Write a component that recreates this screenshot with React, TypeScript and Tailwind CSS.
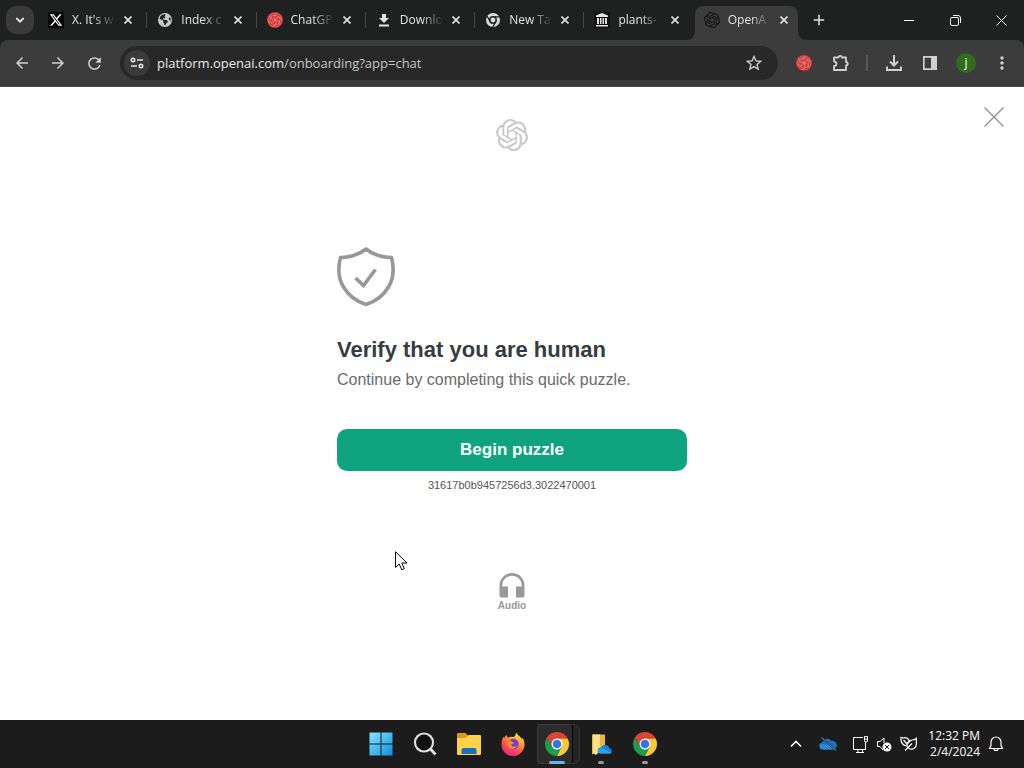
import type { ReactNode } from "react";
import { FaEarthAmericas, FaXTwitter } from "react-icons/fa6";
import { MdAdd, MdArrowBack, MdArrowForward, MdMoreVert, MdRefresh, MdStarBorder } from "react-icons/md";
import { SiOpenai } from "react-icons/si";

function RedBadge() {
  return (
    <svg viewBox="0 0 16 16" className="size-4">
      <circle cx="8" cy="8" r="8" fill="#c93636" />
      <g fill="none" stroke="#f07a7a" strokeWidth="0.6">
        <circle cx="8" cy="8" r="6.8" />
        {[0, 60, 120, 180, 240, 300].map(a => (
          <path key={a} transform={`rotate(${a} 8 8)`} d="M8 8C6 6 6.500 3 9 2M8 8C9 6 12 5 14 7M6 3.500C8 2 11 3 11.500 5.500" />
        ))}
      </g>
    </svg>
  );
}

function BankIcon() {
  return (
    <span className="flex size-4 items-center justify-center bg-[#111]">
      <svg viewBox="0 0 14 14" className="size-3.5" fill="#e3e3e3">
        <path d="M7 0 13 2.500V4H1V2.500zM2 5h2v6H2zM5 5h1.500v6H5zM7.500 5H9v6H7.500zM10 5h2v6h-2zM1 12h12v1.500H1z" />
      </svg>
    </span>
  );
}

function DownloadTab() {
  return (
    <svg viewBox="0 0 16 16" className="size-4" fill="#e3e3e3">
      <path d="M6 2h4v4h3l-5 5-5-5h3zM3 12.500h10v2H3z" />
    </svg>
  );
}

function GrayChrome() {
  return (
    <svg viewBox="0 0 14 14" className="size-3.5" fill="none" stroke="#1f2020" strokeWidth="1.300">
      <circle cx="7" cy="7" r="7" fill="#dcdcdc" stroke="none" />
      <path d="M7 3.800H13.500M4.200 8.600 1 3M9.800 8.600 6.600 14.200" />
      <circle cx="7" cy="7" r="3.200" fill="#dcdcdc" strokeWidth="1.500" />
    </svg>
  );
}

// titles are kept as short as the narrow tabs show them
const tabs: { title: string; icon: ReactNode; active?: boolean }[] = [
  { title: "X. It's w", icon: <span className="flex size-4 items-center justify-center bg-black"><FaXTwitter className="size-3.5 text-white" /></span> },
  { title: "Index c", icon: <FaEarthAmericas className="size-3.5 text-[#c8c8c8]" /> },
  { title: "ChatGP", icon: <RedBadge /> },
  { title: "Downlo", icon: <DownloadTab /> },
  { title: "New Ta", icon: <GrayChrome /> },
  { title: "plants-", icon: <BankIcon /> },
  { title: "OpenA", icon: <SiOpenai className="size-4 text-[#111]" />, active: true },
];

function TabStrip() {
  return (
    <header className="flex h-10 items-start bg-[#1f2020] text-[#e3e3e3]">
      <button aria-label="Search tabs" className="mt-1.5 mr-1 ml-1.5 flex size-7 shrink-0 items-center justify-center rounded-[10px] bg-[#3a3a3a]">
        <svg viewBox="0 0 10 6" className="h-1.5 w-2.5" fill="none" stroke="currentColor" strokeWidth="1.900"><path d="M1.300 1 5 4.600 8.700 1" /></svg>
      </button>
      <nav className="grid h-10 max-w-[765px] flex-1 grid-cols-7">
        {tabs.map((t, i) => (
          <div key={t.title} className="relative flex min-w-0 pt-1.5">
            {t.active && (
              <svg viewBox="0 0 121 34" preserveAspectRatio="none" className="absolute top-1.5 -left-2 h-[34px] w-[121px]" fill="#3c3c3c">
                <path d="M0 34Q9 34 9 25V9Q9 0 18 0H103Q112 0 112 9V25Q112 34 121 34Z" />
              </svg>
            )}
            <div className="relative flex h-7 min-w-0 flex-1 items-center pr-[11px] pl-2.5">
              <span className="flex size-4 shrink-0 items-center justify-center">{t.icon}</span>
              <a href="#" className="ml-2 min-w-0 flex-1 overflow-hidden mask-r-from-45% mask-r-to-90% text-[12px] leading-5 whitespace-nowrap">{t.title}</a>
              <button aria-label={`Close ${t.title}`} className="flex size-4 shrink-0 items-center justify-center">
                <svg viewBox="0 0 8 8" className="size-2" stroke="currentColor" strokeWidth="1.600"><path d="M.5.5l7 7M7.500.5l-7 7" /></svg>
              </button>
            </div>
            {i < 5 && <span className="absolute top-3 right-0 h-4 w-px bg-[#474747]" />}
          </div>
        ))}
      </nav>
      <button aria-label="New tab" className="mt-1.5 flex h-7 w-8 items-center justify-center"><MdAdd className="size-[18px]" /></button>
      <div className="ml-auto flex h-10 text-white">
        <button aria-label="Minimize" className="flex w-[46px] items-center justify-center">
          <svg viewBox="0 0 10 10" className="size-2.5" stroke="currentColor"><path d="M0 5.500h10" /></svg>
        </button>
        <button aria-label="Restore" className="flex w-[46px] items-center justify-center">
          <svg viewBox="0 0 11 11" className="size-[11px]" fill="none" stroke="currentColor"><rect x="0.500" y="2.500" width="8" height="8" rx="1.500" /><path d="M3 .5h5a2.500 2.500 0 0 1 2.500 2.500v5" /></svg>
        </button>
        <button aria-label="Close window" className="flex w-[46px] items-center justify-center">
          <svg viewBox="0 0 11 11" className="size-[11px]" stroke="currentColor"><path d="M.5.5l10 10M10.500.5l-10 10" /></svg>
        </button>
      </div>
    </header>
  );
}

function ToolButton({ label, children }: { label: string; children: ReactNode }) {
  return <button aria-label={label} className="flex h-[34px] w-9 shrink-0 items-center justify-center">{children}</button>;
}

function Toolbar() {
  return (
    <div className="bg-[#1f2020]">
      <div className="flex h-[47px] items-start rounded-t-lg border-b border-[#4a4a4a] bg-[#3c3c3c] px-1 pt-1.5 text-[#d0d0d0]">
        <ToolButton label="Back"><MdArrowBack className="size-[18px]" /></ToolButton>
        <ToolButton label="Forward"><MdArrowForward className="size-[18px]" /></ToolButton>
        <ToolButton label="Reload"><MdRefresh className="size-[19px]" /></ToolButton>
        <div className="mx-2 flex h-[34px] min-w-0 flex-1 items-center rounded-full bg-[#282828] pr-3.5 pl-1">
          <button aria-label="Site information" className="flex size-[26px] shrink-0 items-center justify-center rounded-full bg-[#3a3a3a]">
            <svg viewBox="0 0 14 12" className="h-3 w-3.5" fill="none" stroke="#e3e3e3" strokeWidth="1.600">
              <circle cx="3" cy="3" r="1.700" /><path d="M7 3h6M1 9h6" /><circle cx="11" cy="9" r="1.700" />
            </svg>
          </button>
          <div className="ml-[7px] flex-1 truncate text-[13px] leading-5 text-[#c4c4c4]">
            <span className="text-[#e8e8e8]">platform.openai.com</span>/onboarding?app=chat
          </div>
          <button aria-label="Bookmark this tab"><MdStarBorder className="size-5" /></button>
        </div>
        <ToolButton label="ChatGPT extension"><RedBadge /></ToolButton>
        <ToolButton label="Extensions">
          <svg viewBox="0 0 18 18" className="size-[18px]" fill="none" stroke="currentColor" strokeWidth="1.800" strokeLinejoin="round">
            <path d="M3 3.500H7.500A1.700 1.700 0 0 1 10.900 3.500H15V8A1.700 1.700 0 0 1 15 11.400V16H3V12.200A2.300 2.300 0 0 0 3 7.400Z" />
          </svg>
        </ToolButton>
        <span className="mx-2 mt-[9px] h-4 w-0.5 bg-[#575757]" />
        <ToolButton label="Downloads">
          <svg viewBox="0 0 16 16" className="size-4" fill="none" stroke="currentColor" strokeWidth="2"><path d="M8 0v10M4 6.500l4 4 4-4M1 11.500V15h14v-3.500" /></svg>
        </ToolButton>
        <ToolButton label="Side panel">
          <svg viewBox="0 0 14 14" className="size-3.5" fill="currentColor"><path d="M0 0h14v14H0zM1.700 1.700v10.600H8V1.700z" fillRule="evenodd" /></svg>
        </ToolButton>
        <ToolButton label="Profile"><span className="flex size-5 items-center justify-center rounded-full bg-[#2f6d1c] text-[12px] leading-4 text-white">j</span></ToolButton>
        <ToolButton label="Menu"><MdMoreVert className="size-5" /></ToolButton>
      </div>
    </div>
  );
}

function Challenge() {
  return (
    <main className="relative flex flex-1 flex-col items-center bg-white pt-8 font-['Liberation_Sans',sans-serif]">
      <button aria-label="Close" className="absolute top-5 right-5 text-[#8c8c8c]">
        <svg viewBox="0 0 20 20" className="size-5" stroke="currentColor" strokeWidth="1.200"><path d="M.5.5l19 19M19.500.5l-19 19" /></svg>
      </button>
      <SiOpenai className="size-8 text-[#c9c9c9]" />
      <section className="mt-24 flex w-full max-w-[350px] flex-col">
        <svg viewBox="0 0 58 60" className="h-[60px] w-[58px]" fill="none" stroke="#97979c" strokeWidth="3.600" strokeLinejoin="round">
          <path d="M29 2C22.500 7 13 10.500 3.500 10.500C.8 21 1 31 6.500 40C11.500 48.500 19.500 54.500 29 57.500C38.500 54.500 46.500 48.500 51.500 40C57 31 57.200 21 54.500 10.500C45 10.500 35.500 7 29 2Z" />
          <path d="M18.500 31l8 7.500L38.500 22.500" strokeLinejoin="miter" />
        </svg>
        <h1 className="mt-[29px] text-[22px] leading-7 font-bold text-[#353d40]">Verify that you are human</h1>
        <p className="mt-1 text-[16px] leading-6 text-[#6b6b6b]">Continue by completing this quick puzzle.</p>
        <button className="mt-[37px] h-[42px] rounded-[10px] bg-[#10a37f] text-[17px] font-bold text-white">Begin puzzle</button>
        <p className="mt-1.5 text-center text-[11px] leading-4 text-[#555]">31617b0b9457256d3.3022470001</p>
      </section>
      <button className="mt-20 flex flex-col items-center text-[#999]">
        <svg viewBox="0 0 26 25" className="h-[25px] w-[26px]" fill="currentColor">
          <path d="M13 0C5.800 0 .5 5.500.5 12.500V22.500Q.5 24.500 2.500 24.500H9V13.500H3.300V12.500C3.300 7 7.500 2.800 13 2.800S22.700 7 22.700 12.500V13.500H17V24.500H23.500Q25.500 24.500 25.500 22.500V12.500C25.500 5.500 20.200 0 13 0Z" />
        </svg>
        <span className="text-[10px] leading-4 font-bold">Audio</span>
      </button>
      <svg viewBox="0 0 13 20" className="absolute top-[464px] left-[395px] h-5 w-[13px]" fill="#fff" stroke="#000" strokeWidth="1">
        <path d="M.5.8V16.500L4.200 13 6.800 18.800 9.300 17.700 6.800 12H12Z" />
      </svg>
    </main>
  );
}

function ChromeIcon() {
  return (
    <svg viewBox="0 0 24 24" className="size-6">
      <path d="M12 6.500H22.670A12 12 0 0 0 1.610 6L7.200 14.700z" fill="#db4437" />
      <path d="M1.610 6A12 12 0 0 0 12 24L16.800 14.700 7.200 14.700z" fill="#1a9e4b" />
      <path d="M12 24A12 12 0 0 0 22.670 6.500H12L16.800 14.700z" fill="#fcc934" />
      <circle cx="12" cy="12" r="5.500" fill="#fff" />
      <circle cx="12" cy="12" r="4.300" fill="#3274e0" />
    </svg>
  );
}

function FirefoxIcon() {
  return (
    <svg viewBox="0 0 24 24" className="size-6">
      <defs>
        <linearGradient id="ffBody" x1="0.800" y1="0" x2="0.250" y2="1">
          <stop offset="0" stopColor="#fff04a" /><stop offset="0.350" stopColor="#ffa02d" /><stop offset="0.650" stopColor="#ff4b4b" /><stop offset="1" stopColor="#e5228f" />
        </linearGradient>
      </defs>
      <path d="M15.500.5C14 3 14.500 4.500 12 5C9.500 4.500 8.300 5 7 5.800C6 5 5.900 4 6 3C4.500 3.800 3.800 4.800 3.300 6L2.500 4.800C1 7 .5 9.500.5 12.500A11.500 11.500 0 0 0 23.500 12.500C23.500 9.500 22.500 7 20.800 5.500L21 7.500C19.500 4 16 3.500 15.500.5Z" fill="url(#ffBody)" />
      <circle cx="12.500" cy="12" r="5.200" fill="#7541d5" />
      <path d="M5 9.500C7 8 9.500 8.500 11 10L13 10.500C12.500 12 11 12 10 12.500C10.500 15 14 15.500 16 13.500C14.500 18.500 6 18 5 9.500Z" fill="#ff8b2d" />
    </svg>
  );
}

const apps: { label: string; icon: ReactNode; state?: "active" | "open" }[] = [
  {
    label: "Start",
    icon: (
      <svg viewBox="0 0 24 24" className="size-6">
        <defs><linearGradient id="winBlue" gradientUnits="userSpaceOnUse" x1="0" y1="0" x2="24" y2="24"><stop stopColor="#8be6ff" /><stop offset="1" stopColor="#0a8be0" /></linearGradient></defs>
        <path d="M.5.5h11v11H.5zM12.500.5h11v11h-11zM.5 12.500h11v11H.5zM12.500 12.500h11v11h-11z" fill="url(#winBlue)" />
      </svg>
    ),
  },
  {
    label: "Search",
    icon: <svg viewBox="0 0 24 24" className="size-6" fill="#101010" stroke="#dedede" strokeWidth="2.200"><circle cx="11" cy="10.500" r="9" /><path d="M17.500 17l5 5.500" strokeWidth="2.800" /></svg>,
  },
  {
    label: "File Explorer",
    icon: (
      <svg viewBox="0 0 24 24" className="size-6">
        <path d="M0 2Q0 1 1 1H8.500L11 3.500V7H0Z" fill="#d99b17" />
        <path d="M0 6H8.500L11.500 3H23Q24 3 24 4V22Q24 23 23 23H1Q0 23 0 22Z" fill="#ffd04b" />
        <path d="M4.500 22V18Q4.500 16 6.500 16H17.500Q19.500 16 19.500 18V22Z" fill="#1272bd" />
        <path d="M8 19.500h8V22H8z" fill="#2a6f9f" />
      </svg>
    ),
  },
  { label: "Firefox", icon: <FirefoxIcon /> },
  { label: "Chrome", icon: <ChromeIcon />, state: "active" },
  {
    label: "OneDrive folder",
    icon: (
      <svg viewBox="0 0 24 24" className="size-6">
        <path d="M3 2.500H16V20H8L3 22.500Z" fill="#e9b83b" /><path d="M4 2.500H11V19L7 23 4 21Z" fill="#ffe08a" />
        <path d="M11.500 21.500A3 3 0 0 1 12 15.500 4.500 4.500 0 0 1 19 14Q20 15 20.500 16.300A2.700 2.700 0 0 1 21 21.500Z" fill="#1683d8" />
        <path d="M12 15.500L22.500 20.800Q22 21.500 21 21.500H11.500A3 3 0 0 1 12 15.500Z" fill="#2aa0ef" />
      </svg>
    ),
    state: "open",
  },
  { label: "Chrome profile", icon: <ChromeIcon />, state: "open" },
];

function Taskbar() {
  return (
    <footer className="grid h-12 grid-cols-[1fr_auto_1fr] items-center bg-[#1c1c1c] text-white">
      <span />
      <div className="flex pl-0.5">
        {apps.map(a => (
          <button key={a.label} aria-label={a.label} className="relative flex h-12 w-11 items-center justify-center">
            {a.state === "active" && (
              <>
                <span className="absolute inset-y-1 -right-px left-2 rounded-md border border-[#343434] bg-[#242424]" />
                <span className="absolute inset-y-1 right-1.5 left-0.5 rounded border border-r-black border-[#3b3b3b] bg-[#2c2c2c]" />
              </>
            )}
            <span className="relative">{a.icon}</span>
            {a.state === "active" && <span className="absolute bottom-1 h-[3px] w-4 rounded-full bg-[#5db9ef]" />}
            {a.state === "open" && <span className="absolute bottom-1 h-[3px] w-1.5 rounded-full bg-[#9a9a9a]" />}
          </button>
        ))}
      </div>
      <div className="flex items-center justify-end pr-5">
        <button aria-label="Hidden icons" className="flex w-6 justify-center">
          <svg viewBox="0 0 12 8" className="h-2 w-3" fill="none" stroke="currentColor" strokeWidth="1.600"><path d="M1 6.500l5-5 5 5" /></svg>
        </button>
        <button aria-label="OneDrive" className="flex w-10 justify-center">
          <svg viewBox="0 0 18 14" className="h-3.5 w-[18px]"><path d="M4 12.500A3.500 3.500 0 0 1 3.500 5.500 5 5 0 0 1 12.500 4 4.300 4.300 0 0 1 14.500 12.500Z" fill="#1976c5" /><path d="M4 12.500A3.500 3.500 0 0 1 1.500 7L10 8 15.500 12.500Z" fill="#2b8bd8" /><path d="M2.500.5 17 13.500" stroke="#1c3c58" strokeWidth="2" /><path d="M2.500.5 17 13.500" stroke="#8e8e8e" strokeWidth="0.800" /></svg>
        </button>
        <button aria-label="Network" className="flex w-6 justify-center">
          <svg viewBox="0 0 17 17" className="size-[17px]" fill="none" stroke="currentColor"><path d="M11 1.500H1.500V13.500H13.500V8M4 16.500h8M6 13.500v3M10.500 13.500v3M13.500 6.500v7" /><path d="M12.500.5h3v3.500l-.5 2h-2l-.5-2zM12.500 3h3" /></svg>
        </button>
        <button aria-label="Volume muted" className="flex w-6 justify-center">
          <svg viewBox="0 0 16 16" className="size-4" fill="none" stroke="currentColor"><path d="M7 14 4 10.500H1.500v-5H4L8 2v5" /><circle cx="11" cy="11" r="4.500" fill="#fff" stroke="none" /><path d="M9 9l4 4M13 9l-4 4" stroke="#1c1c1c" /></svg>
        </button>
        <button aria-label="Battery saver" className="flex w-6 justify-center">
          <svg viewBox="0 0 17 16" className="h-4 w-[17px]" fill="none" stroke="currentColor" strokeWidth="1.200"><path d="M6.500 10C2 9 .6 5.500 1 1.500c1.500.8 2.500.2 4 .2S8 2.500 9 4.500M3.500 4l3.500 4L11 4" /><path d="M16.400 2.500v5.500C16.400 12 13 13.500 10 13 6.500 12 5.800 7.500 9 5 11 3.500 14.500 4.500 16.400 2.500ZM5 14.500 12 7.500" /></svg>
        </button>
        <time className="ml-2 text-right text-[12px] leading-4">12:32 PM<br />2/4/2024</time>
        <button aria-label="Notifications" className="ml-2">
          <svg viewBox="0 0 16 16" className="size-4" fill="none" stroke="currentColor" strokeWidth="1.200"><path d="M1.500 12.500 3 9.500V6a5 5 0 0 1 10 0v3.500l1.500 3ZM6 12.500a2 2 0 0 0 4 0" /></svg>
        </button>
      </div>
    </footer>
  );
}

export default function App() {
  return (
    <div className="flex min-h-screen flex-col font-['Open_Sans','Noto_Sans',sans-serif]">
      <TabStrip />
      <Toolbar />
      <Challenge />
      <Taskbar />
    </div>
  );
}
